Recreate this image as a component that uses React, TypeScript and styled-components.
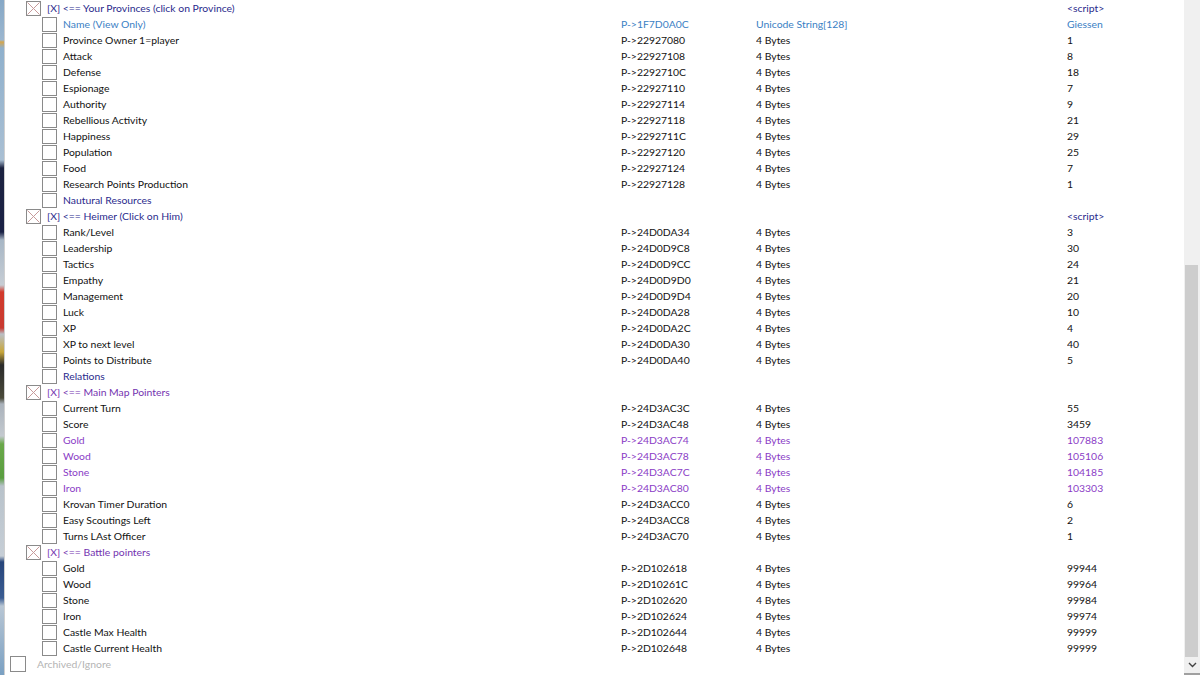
import React, { FC } from 'react';
import styled, { createGlobalStyle } from 'styled-components';

type Tone = 'plain' | 'navy' | 'purple' | 'teal' | 'violet' | 'muted';

interface Entry {
  level: number;
  desc: string;
  addr?: string;
  type?: string;
  value?: string;
  tone?: Tone;
  group?: boolean;
}

const tones: Record<Tone, string> = {
  plain: '#111111',
  navy: '#2a2a8c',
  purple: '#7434b0',
  teal: '#3a80c4',
  violet: '#8a3cc6',
  muted: '#b4b4b4',
};

const b4 = '4 Bytes';

const entries: Entry[] = [
  { level: 1, group: true, desc: '[X] <== Your Provinces (click on Province)', value: '<script>', tone: 'navy' },
  { level: 2, desc: 'Name (View Only)', addr: 'P->1F7D0A0C', type: 'Unicode String[128]', value: 'Giessen', tone: 'teal' },
  { level: 2, desc: 'Province Owner 1=player', addr: 'P->22927080', type: b4, value: '1' },
  { level: 2, desc: 'Attack', addr: 'P->22927108', type: b4, value: '8' },
  { level: 2, desc: 'Defense', addr: 'P->2292710C', type: b4, value: '18' },
  { level: 2, desc: 'Espionage', addr: 'P->22927110', type: b4, value: '7' },
  { level: 2, desc: 'Authority', addr: 'P->22927114', type: b4, value: '9' },
  { level: 2, desc: 'Rebellious Activity', addr: 'P->22927118', type: b4, value: '21' },
  { level: 2, desc: 'Happiness', addr: 'P->2292711C', type: b4, value: '29' },
  { level: 2, desc: 'Population', addr: 'P->22927120', type: b4, value: '25' },
  { level: 2, desc: 'Food', addr: 'P->22927124', type: b4, value: '7' },
  { level: 2, desc: 'Research Points Production', addr: 'P->22927128', type: b4, value: '1' },
  { level: 2, desc: 'Nautural Resources', tone: 'navy' },
  { level: 1, group: true, desc: '[X] <== Heimer (Click on Him)', value: '<script>', tone: 'navy' },
  { level: 2, desc: 'Rank/Level', addr: 'P->24D0DA34', type: b4, value: '3' },
  { level: 2, desc: 'Leadership', addr: 'P->24D0D9C8', type: b4, value: '30' },
  { level: 2, desc: 'Tactics', addr: 'P->24D0D9CC', type: b4, value: '24' },
  { level: 2, desc: 'Empathy', addr: 'P->24D0D9D0', type: b4, value: '21' },
  { level: 2, desc: 'Management', addr: 'P->24D0D9D4', type: b4, value: '20' },
  { level: 2, desc: 'Luck', addr: 'P->24D0DA28', type: b4, value: '10' },
  { level: 2, desc: 'XP', addr: 'P->24D0DA2C', type: b4, value: '4' },
  { level: 2, desc: 'XP to next level', addr: 'P->24D0DA30', type: b4, value: '40' },
  { level: 2, desc: 'Points to Distribute', addr: 'P->24D0DA40', type: b4, value: '5' },
  { level: 2, desc: 'Relations', tone: 'navy' },
  { level: 1, group: true, desc: '[X] <== Main Map Pointers', tone: 'purple' },
  { level: 2, desc: 'Current Turn', addr: 'P->24D3AC3C', type: b4, value: '55' },
  { level: 2, desc: 'Score', addr: 'P->24D3AC48', type: b4, value: '3459' },
  { level: 2, desc: 'Gold', addr: 'P->24D3AC74', type: b4, value: '107883', tone: 'violet' },
  { level: 2, desc: 'Wood', addr: 'P->24D3AC78', type: b4, value: '105106', tone: 'violet' },
  { level: 2, desc: 'Stone', addr: 'P->24D3AC7C', type: b4, value: '104185', tone: 'violet' },
  { level: 2, desc: 'Iron', addr: 'P->24D3AC80', type: b4, value: '103303', tone: 'violet' },
  { level: 2, desc: 'Krovan Timer Duration', addr: 'P->24D3ACC0', type: b4, value: '6' },
  { level: 2, desc: 'Easy Scoutings Left', addr: 'P->24D3ACC8', type: b4, value: '2' },
  { level: 2, desc: 'Turns LAst Officer', addr: 'P->24D3AC70', type: b4, value: '1' },
  { level: 1, group: true, desc: '[X] <== Battle pointers', tone: 'purple' },
  { level: 2, desc: 'Gold', addr: 'P->2D102618', type: b4, value: '99944' },
  { level: 2, desc: 'Wood', addr: 'P->2D10261C', type: b4, value: '99964' },
  { level: 2, desc: 'Stone', addr: 'P->2D102620', type: b4, value: '99984' },
  { level: 2, desc: 'Iron', addr: 'P->2D102624', type: b4, value: '99974' },
  { level: 2, desc: 'Castle Max Health', addr: 'P->2D102644', type: b4, value: '99999' },
  { level: 2, desc: 'Castle Current Health', addr: 'P->2D102648', type: b4, value: '99999' },
  { level: 0, desc: 'Archived/Ignore', tone: 'muted' },
];

const CrossBox: FC = () => (
  <svg width="15" height="15" viewBox="0 0 15 15">
    <rect x="0.5" y="0.5" width="14" height="14" fill="#fff" stroke="#8a8a8a" />
    <path d="M1.5 1.5 L13.5 13.5 M13.5 1.5 L1.5 13.5" stroke="#c79a9a" strokeWidth="1" />
  </svg>
);

const App: FC = () => {
  return (
    <>
      <GlobalStyle />
      <Window>
        <DesktopEdge />
        <List>
          {entries.map((item, i) => (
            <Row key={i} tone={item.tone || 'plain'}>
              <DescCell level={item.level}>
                {item.group ? <CrossBox /> : <Box large={item.level === 0} />}
                <span>{item.desc}</span>
              </DescCell>
              <Cell>{item.addr}</Cell>
              <Cell>{item.type}</Cell>
              <Cell>{item.value}</Cell>
            </Row>
          ))}
        </List>
        <ScrollBar>
          <Track />
          <Thumb />
          <Arrow>
            <svg width="9" height="6" viewBox="0 0 9 6">
              <path d="M1 1 L4.5 4.5 L8 1" stroke="#444" strokeWidth="1.4" fill="none" />
            </svg>
          </Arrow>
        </ScrollBar>
      </Window>
    </>
  );
};

const GlobalStyle = createGlobalStyle`
  *, *::before, *::after {
    box-sizing: border-box;
  }
  html, body {
    margin: 0;
    padding: 0;
    background: #ffffff;
    overflow: hidden;
  }
  body {
    font-family: Lato, "Open Sans", "Liberation Sans", sans-serif;
  }
`;

const Window = styled.div`
  display: flex;
  width: 1200px;
  height: 675px;
  background: #ffffff;
  overflow: hidden;
`;

const DesktopEdge = styled.div`
  width: 5px;
  flex-shrink: 0;
  border-right: 1px solid #cfcfcf;
  background: linear-gradient(
    to bottom,
    #86a8c6 0px,
    #9bb6cf 40px,
    #d7a64a 42px,
    #8fb0cc 48px,
    #a9bfd3 160px,
    #1c2240 168px,
    #1a2145 232px,
    #a7b6c5 240px,
    #c6cdd4 285px,
    #d23a2c 292px,
    #c83a30 328px,
    #b9bfc6 334px,
    #c8a63a 352px,
    #2a2a2a 365px,
    #4a4a3a 398px,
    #aab2bb 404px,
    #c3c9cf 436px,
    #6aa84a 444px,
    #5a9e40 478px,
    #b8c2ca 486px,
    #c6ced6 556px,
    #27457a 562px,
    #3a5c92 598px,
    #b8c6d4 606px,
    #7aa0c2 675px
  );
`;

const List = styled.div`
  flex: 1;
  display: flex;
  flex-direction: column;
  min-width: 0;
`;

const Row = styled.div<{ tone: Tone }>`
  display: grid;
  grid-template-columns: 616px 135px 311px 1fr;
  align-items: center;
  height: 16px;
  padding-top: 1px;
  font-size: 10.4px;
  line-height: 15px;
  white-space: nowrap;
  color: ${(props) => tones[props.tone]};
`;

const DescCell = styled.div<{ level: number }>`
  display: flex;
  align-items: center;
  gap: 7px;
  padding-left: ${(props) => (props.level === 0 ? 5 : props.level === 1 ? 21 : 37)}px;
  svg {
    flex-shrink: 0;
    margin-top: -1px;
  }
  span {
    margin-left: ${(props) => (props.level === 0 ? 4 : -1)}px;
  }
`;

const Box = styled.div<{ large?: boolean }>`
  width: ${(props) => (props.large ? 16 : 15)}px;
  height: ${(props) => (props.large ? 16 : 15)}px;
  margin-top: -1px;
  flex-shrink: 0;
  border: 1px solid #8a8a8a;
  background: #ffffff;
`;

const Cell = styled.div`
  overflow: hidden;
`;

const ScrollBar = styled.div`
  position: relative;
  width: 16px;
  flex-shrink: 0;
  display: flex;
  flex-direction: column;
  background: #f0f0f0;
  border-bottom: 2px solid #a0a0a0;
`;

const Track = styled.div`
  height: 265px;
`;

const Thumb = styled.div`
  flex: 1;
  margin: 0 2px 0 1px;
  background: #cdcdcd;
`;

const Arrow = styled.div`
  height: 16px;
  display: flex;
  align-items: center;
  justify-content: center;
`;

export default App;
